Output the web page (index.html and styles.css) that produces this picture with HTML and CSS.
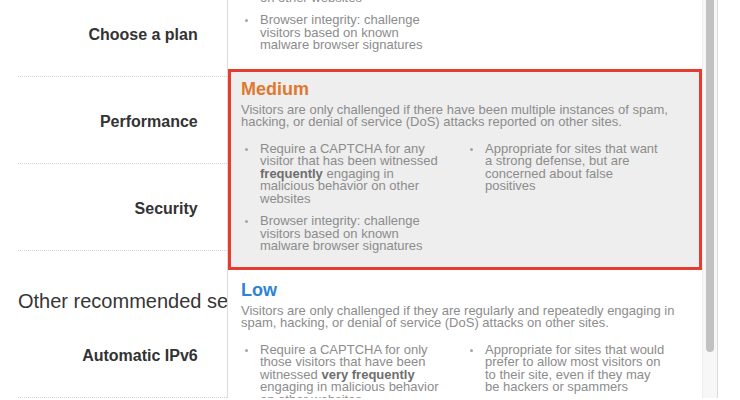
FILE: index.html
```html
<!DOCTYPE html>
<html lang="en">
<head>
    <meta charset="UTF-8">
    <meta name="viewport" content="width=device-width, initial-scale=1.0">
    <title>Site settings</title>
    <link rel="stylesheet" href="styles.css">
</head>
<body>
    <div class="settings">
        <div class="field">
            <label class="field-label">Choose a plan</label>
            <div class="select"></div>
        </div>
        <div class="field">
            <label class="field-label">Performance</label>
            <div class="select"></div>
        </div>
        <div class="field">
            <label class="field-label">Security</label>
            <div class="select"></div>
        </div>

        <h2 class="section-title">Other recommended settings</h2>

        <div class="field">
            <label class="field-label">Automatic IPv6</label>
            <div class="select"></div>
        </div>

        <div class="dropdown">
            <div class="options">
                <div class="option">
                    <h3 class="option-title high">High</h3>
                    <p class="option-desc">Visitors are challenged if they have been engaging in spam, hacking, or denial of service (DoS) attacks on other sites.</p>
                    <ul class="option-points">
                        <li>Require a CAPTCHA for any visitor that has been witnessed engaging in malicious behavior on other websites</li>
                        <li>Appropriate for sites that are often targeted by attackers</li>
                        <li>Browser integrity: challenge visitors based on known malware browser signatures</li>
                    </ul>
                </div>
                <div class="option active">
                    <h3 class="option-title medium">Medium</h3>
                    <p class="option-desc">Visitors are only challenged if there have been multiple instances of spam, hacking, or denial of service (DoS) attacks reported on other sites.</p>
                    <ul class="option-points">
                        <li>Require a CAPTCHA for any visitor that has been witnessed <strong>frequently</strong> engaging in malicious behavior on other websites</li>
                        <li>Appropriate for sites that want a strong defense, but are concerned about false positives</li>
                        <li>Browser integrity: challenge visitors based on known malware browser signatures</li>
                    </ul>
                </div>
                <div class="option">
                    <h3 class="option-title low">Low</h3>
                    <p class="option-desc">Visitors are only challenged if they are regularly and repeatedly engaging in spam, hacking, or denial of service (DoS) attacks on other sites.</p>
                    <ul class="option-points">
                        <li>Require a CAPTCHA for only those visitors that have been witnessed <strong>very frequently</strong> engaging in malicious behavior on other websites</li>
                        <li>Appropriate for sites that would prefer to allow most visitors on to their site, even if they may be hackers or spammers</li>
                        <li>Browser integrity: challenge visitors based on known malware browser signatures</li>
                    </ul>
                </div>
            </div>
            <div class="scrollbar">
                <div class="scrollbar-thumb"></div>
            </div>
        </div>
    </div>
</body>
</html>
```

FILE: styles.css
```css
* {
    margin: 0;
    padding: 0;
    box-sizing: border-box;
}

body {
    font-family: "Liberation Sans", Helvetica, Arial, sans-serif;
    background: #fff;
    color: #333;
}

.settings {
    position: relative;
    margin-top: -10px;
    padding: 0 23px 0 18px;
}

.field {
    display: flex;
    align-items: center;
    height: 87px;
    border-bottom: 1px dotted #d4d4d4;
}

.field-label {
    width: 180px;
    padding-top: 3px;
    text-align: right;
    font-size: 16px;
    line-height: 20px;
    font-weight: bold;
    color: #333;
}

.select {
    margin-left: 29px;
    width: 491px;
    height: 33px;
    border: 1px solid #999;
    border-radius: 3px;
}

.section-title {
    margin-top: 40px;
    font-size: 20px;
    line-height: 20px;
    font-weight: normal;
    color: #363636;
    white-space: nowrap;
}

/* open security level menu */
.dropdown {
    position: absolute;
    left: 227px;
    top: -110px;
    width: 491px;
    height: 520px;
    display: flex;
    overflow: hidden;
    background: #fff;
    border-left: 1px solid rgba(0, 0, 0, 0.14);
    border-right: 1px solid rgba(0, 0, 0, 0.14);
}

.options {
    flex: 1;
}

.option {
    padding: 7px 10px 14px;
    border: 3px solid transparent;
}

.option.active {
    background: #eeeeee;
    border-color: #e53b30;
}

.option-title {
    font-size: 18px;
    line-height: 20px;
    margin-bottom: 5px;
}

.option-title.high {
    color: #c9302c;
}

.option-title.medium {
    color: #e0782f;
}

.option-title.low {
    color: #2d84d5;
}

.option-desc,
.option-points {
    font-size: 13px;
    line-height: 12.5px;
    color: #8c8c8c;
}

.option-points {
    list-style: none;
    margin-top: 14px;
    display: grid;
    grid-template-columns: 200px 200px;
    column-gap: 25px;
    row-gap: 10px;
}

.option-points li {
    padding-left: 19px;
}

.option-points li::before {
    content: "";
    display: inline-block;
    width: 3px;
    height: 3px;
    border-radius: 50%;
    background: #a5a5a5;
    vertical-align: middle;
    margin-left: -15px;
    margin-right: 12px;
}

.option-points strong {
    color: #6e6e6e;
}

.scrollbar {
    width: 15px;
    background: #f7f7f7;
    border-left: 1px solid #ececec;
}

.scrollbar-thumb {
    margin: 100px 0 0 3px;
    width: 8px;
    height: 372px;
    border-radius: 4px;
    background: #c1c1c1;
}
```
